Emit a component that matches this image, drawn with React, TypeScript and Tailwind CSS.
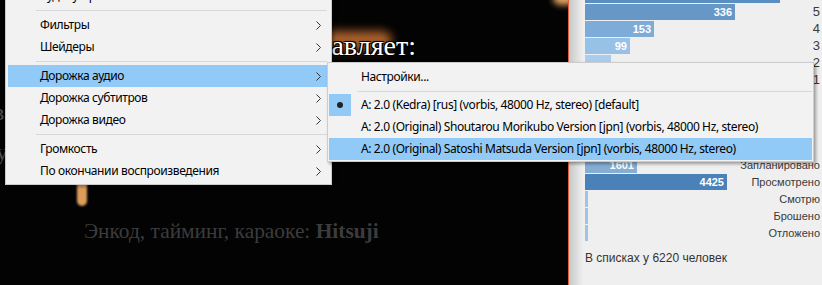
import React from "react";

type Item = { label: string; sub?: boolean; active?: boolean; checked?: boolean } | "sep";

const mainItems: Item[] = [
  { label: "Аудиоустройство" },
  "sep",
  { label: "Фильтры", sub: true },
  { label: "Шейдеры", sub: true },
  "sep",
  { label: "Дорожка аудио", sub: true, active: true },
  { label: "Дорожка субтитров", sub: true },
  { label: "Дорожка видео", sub: true },
  "sep",
  { label: "Громкость", sub: true },
  { label: "По окончании воспроизведения", sub: true },
];

const audioItems: Item[] = [
  { label: "Настройки..." },
  "sep",
  { label: "A: 2.0 (Kedra) [rus] (vorbis, 48000 Hz, stereo) [default]", checked: true },
  { label: "A: 2.0 (Original) Shoutarou Morikubo Version [jpn] (vorbis, 48000 Hz, stereo)" },
  { label: "A: 2.0 (Original) Satoshi Matsuda Version [jpn] (vorbis, 48000 Hz, stereo)", active: true },
];

// top row is cut by the window edge, so no texts there
const ratings = [
  { label: "", value: 0, width: 195, color: "bg-[#5b8ec1]" },
  { label: "5", value: 336, width: 150, color: "bg-[#6697c6]" },
  { label: "4", value: 153, width: 69, color: "bg-[#7eacd9]" },
  { label: "3", value: 99, width: 45, color: "bg-[#98c1e7]" },
  { label: "2", value: 57, width: 26, color: "bg-[#a9cdee]" },
  { label: "1", value: 31, width: 14, color: "bg-[#b3d3f0]" },
];

const statuses = [
  { label: "Запланировано", value: 1601, width: 52, color: "bg-[#86aed4]" },
  { label: "Просмотрено", value: 4425, width: 142, color: "bg-[#4a81b9]" },
  { label: "Смотрю", value: 31, width: 2, color: "bg-[#9fc4e7]" },
  { label: "Брошено", value: 48, width: 3, color: "bg-[#9fc4e7]" },
  { label: "Отложено", value: 30, width: 2, color: "bg-[#9fc4e7]" },
];

function Chevron() {
  return (
    <svg width="5" height="9" viewBox="0 0 5 9" className="ml-auto mr-[6px] shrink-0">
      <path d="M0.5 0.5 L4.5 4.5 L0.5 8.5" fill="none" stroke="#333" strokeWidth="1" />
    </svg>
  );
}

function MenuList({ items, sepHeight }: { items: Item[]; sepHeight: string }) {
  return (
    <>
      {items.map((it, i) =>
        it === "sep" ? (
          <div key={i} className={`flex items-center pl-[28px] ${sepHeight}`}>
            <div className="h-px w-full bg-[#d7d7d7]" />
          </div>
        ) : (
          <div
            key={i}
            className={`flex h-[22px] items-center text-[12px] tracking-[-0.38px] text-black whitespace-nowrap ${
              it.active ? "bg-[#91c9f7]" : ""
            }`}
          >
            <div className="flex w-[22px] h-[22px] shrink-0 items-center justify-center">
              {it.checked && (
                <div className="flex w-[22px] h-[22px] items-center justify-center bg-[#91c9f7]">
                  <div className="w-[6px] h-[6px] rounded-full bg-[#222]" />
                </div>
              )}
            </div>
            <span className="pl-[10px]">{it.label}</span>
            {it.sub && <Chevron />}
          </div>
        )
      )}
    </>
  );
}

function VideoFrame() {
  return (
    <div className="relative w-[568px] h-full shrink-0 bg-[#030303] overflow-hidden font-['Liberation_Serif',serif]">
      {/* orange glows in the frame */}
      <div className="absolute left-[322px] top-[31px] w-[70px] h-[20px] rounded-full bg-[#a95f2b] blur-[5px]" />
      <div className="absolute left-[553px] top-[-9px] w-[22px] h-[14px] rounded-full bg-[#e2a262] blur-[3px]" />
      <div className="absolute left-[77px] top-[176px] w-[10px] h-[30px] rounded-full bg-[#dc9d58] blur-[1px]" />

      <div className="absolute right-[152px] top-[32px] text-[28px] leading-none text-white whitespace-nowrap [text-shadow:1px_1px_0_#000,-1px_-1px_0_#000,1px_-1px_0_#000,-1px_1px_0_#000,0_0_3px_#000]">
        Сэмпай представляет:
      </div>
      <div className="absolute left-[-7px] top-[100px] text-[24px] leading-none text-[#4d4d4d]">в</div>
      <div className="absolute left-[-4px] top-[140px] text-[24px] leading-none text-[#4d4d4d]">у</div>

      <div className="absolute left-[84px] top-[221px] text-[21.4px] leading-none text-[#3c3c3c] whitespace-nowrap">
        Энкод, тайминг, караоке: <b>Hitsuji</b>
      </div>
    </div>
  );
}

function BarRow({ label, value, width, color, labelSize }: { label: string; value: number; width: number; color: string; labelSize: string }) {
  return (
    <div className="flex h-[16px] mb-[1px] items-center">
      <div
        className={`flex h-full items-center justify-end pr-[3px] text-[11px] font-bold text-white ${color}`}
        style={{ width }}
      >
        {width > 30 && value > 0 ? value : ""}
      </div>
      <div className={`flex-1 text-right text-[#3a3a3a] ${labelSize}`}>{label}</div>
    </div>
  );
}

function StatsPanel() {
  return (
    <div className="flex-1 h-full border-l border-[#e0613e] bg-[linear-gradient(to_right,#c8c8c8,#efefef_14px,#efefef)] pl-[16px] pr-[2px] font-['Liberation_Sans',sans-serif]">
      <div className="mt-[-13px]">
        {ratings.map((r, i) => (
          <BarRow key={i} {...r} labelSize="text-[13px]" />
        ))}
      </div>
      <div className="mt-[69px]">
        {statuses.map((s) => (
          <BarRow key={s.label} {...s} labelSize="text-[11px]" />
        ))}
      </div>
      <div className="mt-[9px] text-[12px] leading-[16px] text-[#333]">В списках у 6220 человек</div>
    </div>
  );
}

export default function App() {
  return (
    <div className="relative flex w-[822px] h-[285px] overflow-hidden font-['Noto_Sans',sans-serif]">
      <VideoFrame />
      <StatsPanel />

      {/* main context menu */}
      <div className="absolute left-[5px] top-[-18px] w-[327px] border border-[#cccccc] bg-[#f2f2f2] pt-[2px] pb-[2px] pl-[2px] pr-[4px] shadow-[2px_2px_3px_rgba(0,0,0,0.35)]">
        <MenuList items={mainItems} sepHeight="h-[7px]" />
      </div>

      {/* audio track submenu */}
      <div className="absolute left-[327px] top-[62px] w-[487px] border border-[#cccccc] bg-[#f2f2f2] pt-[3px] pb-[1px] px-[1px] shadow-[2px_2px_3px_rgba(0,0,0,0.35)]">
        <MenuList items={audioItems} sepHeight="h-[6px]" />
      </div>
    </div>
  );
}
